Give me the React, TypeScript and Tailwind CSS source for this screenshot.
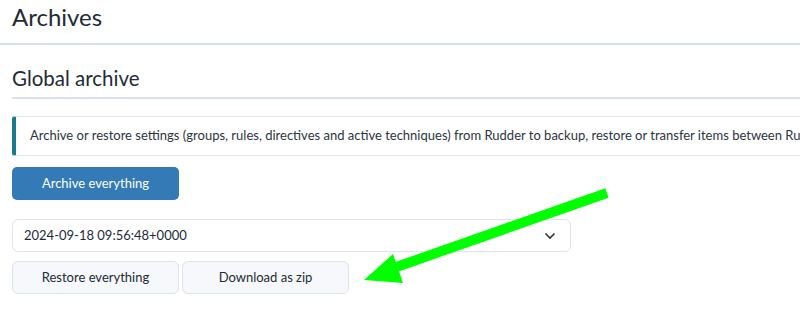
export default function App() {
  return (
    <div className="relative h-[320px] w-[800px] overflow-hidden bg-white text-[#1f2a37] [font-family:Lato,'Noto_Sans',sans-serif]">
      <div className="w-[1100px]">
        <div className="border-b-2 border-[#d8e0ef] px-3 pb-[11px] pt-[2px]">
          <h1 className="text-[24px] leading-[30px] text-[#222b36]">
            Archives
          </h1>
        </div>
        <div className="px-3">
          <div className="mt-[20px] border-b-2 border-[#d8e0ef] pb-[6px]">
            <h2 className="text-[20.5px] leading-[26px] text-[#222b36]">
              Global archive
            </h2>
          </div>
          <div className="mt-[17px] flex h-[40px] items-center whitespace-nowrap rounded-[3px] border border-l-4 border-[#e6e6e6] border-l-[#1b7a8f] pl-[14px] text-[13px] text-[#2c3440]">
            Archive or restore settings (groups, rules, directives and active techniques) from Rudder to backup, restore or transfer items between Rudder servers.
          </div>
          <button className="mt-[11px] flex h-[33px] w-[167px] items-center justify-center rounded-[5px] bg-[#337ab7] text-[13px] text-white">
            Archive everything
          </button>
          <div className="mt-[19px] flex h-[33px] w-[559px] items-center justify-between rounded-[6px] border border-[#dde3ef] pl-[11px] pr-[14px] text-[13px] text-[#222b36]">
            <span>2024-09-18 09:56:48+0000</span>
            <svg width="12" height="8" viewBox="0 0 12 8" fill="none" stroke="#333" strokeWidth="1.6">
              <path d="M1.5 1.5 L6 6 L10.5 1.5" />
            </svg>
          </div>
          <div className="mt-[9px] flex gap-[3px] text-[13px] text-[#222b36]">
            <button className="flex h-[33px] w-[167px] items-center justify-center rounded-[6px] border border-[#dde3ef] bg-[#f7f8fc]">
              Restore everything
            </button>
            <button className="flex h-[33px] w-[167px] items-center justify-center rounded-[6px] border border-[#dde3ef] bg-[#f7f8fc]">
              Download as zip
            </button>
          </div>
        </div>
      </div>
      <svg className="pointer-events-none absolute left-0 top-0" width="800" height="320" viewBox="0 0 800 320">
        <line x1="607" y1="193" x2="385" y2="271" stroke="#00ff00" strokeWidth="10" />
        <polygon points="364,280 393,254 403,283" fill="#00ff00" />
      </svg>
    </div>
  )
}
